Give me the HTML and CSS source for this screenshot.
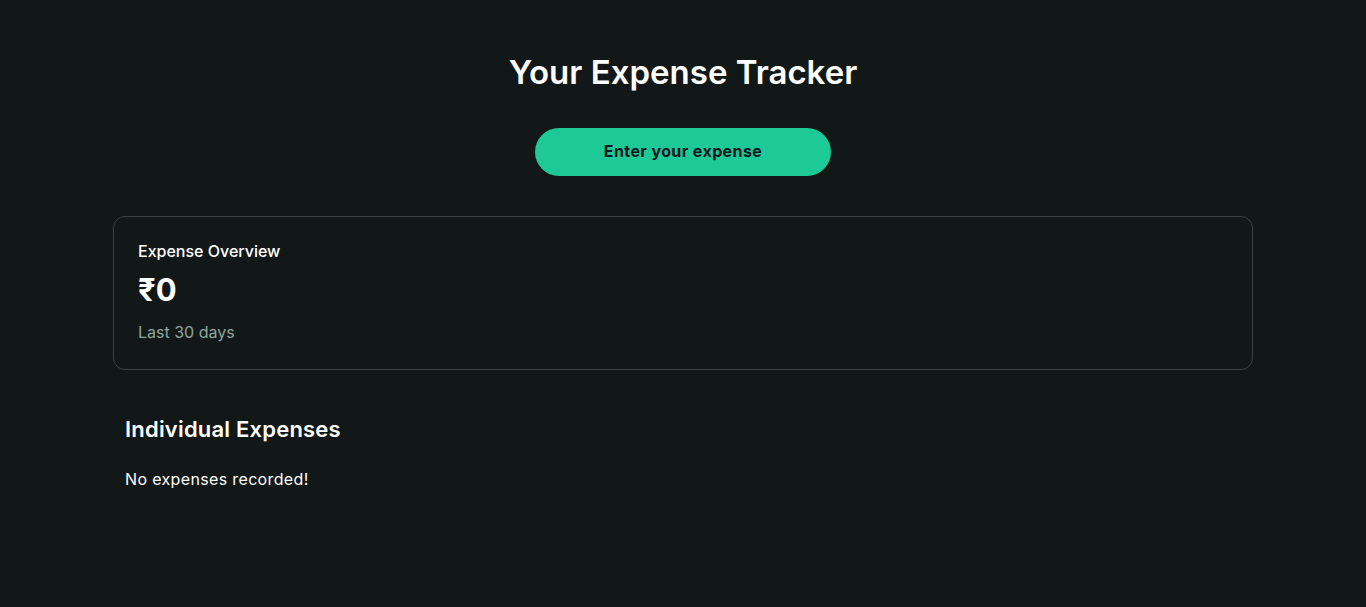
FILE: index.html
```html
<!DOCTYPE html>
<html lang="en">
<head>
<meta charset="utf-8">
<title>Your Expense Tracker</title>
<link rel="stylesheet" href="styles.css">
</head>
<body>
<main class="page">
  <h1 class="title">Your Expense Tracker</h1>
  <div class="actions">
    <button class="btn-primary">Enter your expense</button>
  </div>
  <section class="card">
    <div class="card-label">Expense Overview</div>
    <div class="card-amount">₹0</div>
    <div class="card-sub">Last 30 days</div>
  </section>
  <section class="list">
    <h2 class="list-title">Individual Expenses</h2>
    <p class="list-empty">No expenses recorded!</p>
  </section>
</main>
</body>
</html>
```
FILE: styles.css
```css
* { box-sizing: border-box; }
html, body { margin: 0; padding: 0; }
body {
  background: #121818;
  color: #ffffff;
  font-family: "Inter", "Noto Sans", sans-serif;
  min-height: 607px;
}
.page {
  max-width: 1140px;
  margin: 0 auto;
  padding-top: 51px;
}
.title {
  margin: 0;
  text-align: center;
  font-size: 33px;
  font-weight: 600;
  line-height: 42px;
  letter-spacing: 0;
}
.actions {
  display: flex;
  justify-content: center;
  margin-top: 35px;
}
.btn-primary {
  width: 296px;
  height: 48px;
  padding: 0 0 2px;
  border: none;
  border-radius: 24px;
  background: #1dc996;
  color: #0b1620;
  font-family: inherit;
  font-size: 16px;
  font-weight: 700;
  letter-spacing: 0.4px;
}
.card {
  margin-top: 40px;
  border: 1px solid #3b4543;
  border-radius: 12px;
  padding: 23px 24px 28px;
  height: 154px;
}
.card-label {
  font-size: 16px;
  font-weight: 500;
  line-height: 22px;
}
.card-amount {
  margin-top: 10px;
  font-size: 31px;
  font-weight: 700;
  line-height: 36px;
}
.card-sub {
  margin-top: 13px;
  font-size: 16px;
  color: #8fa6a0;
  line-height: 22px;
}
.list {
  padding: 0 12px;
  margin-top: 44px;
}
.list-title {
  margin: 0;
  font-size: 22px;
  font-weight: 600;
  line-height: 30px;
  letter-spacing: 0.2px;
}
.list-empty {
  margin: 24px 0 0;
  font-size: 16px;
  line-height: 22px;
  letter-spacing: 0.35px;
}
```
